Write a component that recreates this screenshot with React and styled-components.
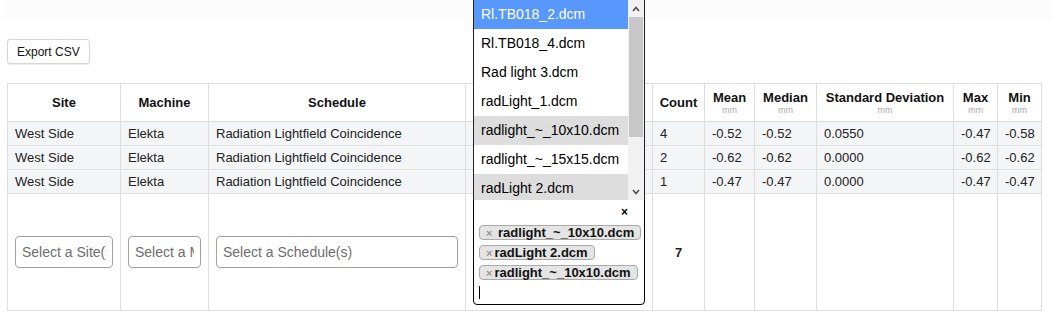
import React from "react"
import styled, { createGlobalStyle } from "styled-components"

const GlobalStyle = createGlobalStyle`
  body {
    margin: 0;
    background: #fff;
    color: #222;
    font-family: "Liberation Sans", Arial, sans-serif;
  }
`

const Page = styled.div`
  padding-left: 7px;
`

const TopBand = styled.div`
  height: 20px;
  margin-left: -4px;
  background: #fcfcfc;
`

const Toolbar = styled.div`
  padding: 19px 0 19px;
`

const Button = styled.button`
  display: block;
  height: 25px;
  padding: 0 9px;
  border: 1px solid #d6d6d6;
  border-radius: 3px;
  background: #fff;
  box-shadow: 0 1px 1px rgba(0, 0, 0, 0.08);
  font-family: inherit;
  font-size: 12px;
  color: #111;
`

const Table = styled.table`
  width: 1035px;
  table-layout: fixed;
  border-collapse: collapse;
  font-size: 13px;
`

const Th = styled.th`
  height: 37px;
  padding: 0 4px;
  border: 1px solid #dedede;
  background: #fff;
  color: #111;
  font-weight: bold;
  text-align: center;
  vertical-align: middle;
  line-height: 15px;
`

const Unit = styled.div`
  font-size: 9px;
  line-height: 11px;
  font-weight: normal;
  color: #aaa;
`

const Row = styled.tr`
  background: ${p => (p.$filter ? "#fff" : "#f4f5f7")};
`

const Td = styled.td`
  height: 23px;
  padding: 0 7px;
  border: 1px solid #dedede;
  vertical-align: middle;
  white-space: nowrap;
  overflow: ${p => (p.$open ? "visible" : "hidden")};
  text-align: ${p => (p.$center ? "center" : "left")};
  font-weight: ${p => (p.$bold ? "bold" : "normal")};
`

const FilterInput = styled.input`
  box-sizing: border-box;
  width: 100%;
  height: 32px;
  padding: 0 6px;
  border: 1px solid #a0a0a0;
  border-radius: 4px;
  font-family: inherit;
  font-size: 14px;

  &::placeholder {
    color: #6e6e6e;
  }
`

const MultiSelect = styled.div`
  position: relative;
  box-sizing: border-box;
  height: 106px;
  padding: 0 5px;
  border: 1px solid #000;
  border-radius: 0 0 4px 4px;
  background: #fff;
`

const ClearRow = styled.div`
  display: flex;
  justify-content: flex-end;
  align-items: center;
  height: 24px;
  margin-bottom: 1px;
  padding-right: 11px;
  font-size: 12px;
  font-weight: bold;
  color: #000;
`

const Tags = styled.div`
  display: flex;
  flex-direction: column;
  align-items: flex-start;
  gap: 5px;
`

const Tag = styled.span`
  box-sizing: border-box;
  height: 15px;
  padding: 0 6px;
  border: 1px solid #aaa;
  border-radius: 4px;
  background: #e4e4e4;
  font-size: 13px;
  font-weight: bold;
  line-height: 13px;
  color: #111;
  white-space: pre;
`

const TagRemove = styled.span`
  margin-right: 2px;
  font-size: 11px;
  color: #999;
`

const Caret = styled.div`
  width: 1px;
  height: 13px;
  margin-top: 6px;
  background: #000;
`

const Listbox = styled.div`
  position: absolute;
  left: -1px;
  right: -1px;
  bottom: 100%;
  z-index: 5;
  display: flex;
  height: 200px;
  overflow: hidden;
  border-left: 1px solid #222;
  border-right: 1px solid #222;
  background: #fff;
`

const Options = styled.div`
  flex: 1;
  min-width: 0;
`

const Option = styled.div`
  height: 29px;
  padding-left: 7px;
  font-size: 14px;
  line-height: 29px;
  white-space: nowrap;
  color: ${p => (p.$active ? "#fff" : "#000")};
  background: ${p => (p.$active ? "#5897fb" : p.$selected ? "#ddd" : "#fff")};
`

const Scrollbar = styled.div`
  display: flex;
  flex-direction: column;
  width: 16px;
  background: #f1f1f1;
`

const ScrollArrow = styled.div`
  display: flex;
  align-items: center;
  justify-content: center;
  height: 17px;
`

const ScrollTrack = styled.div`
  flex: 1;
`

const Thumb = styled.div`
  height: 120px;
  margin: 0 1px;
  background: #c8c8c8;
`

const columns = [
  { key: "site", label: "Site", width: 113 },
  { key: "machine", label: "Machine", width: 88 },
  { key: "schedule", label: "Schedule", width: 257 },
  { key: "file", label: "", width: 187 },
  { key: "count", label: "Count", width: 52 },
  { key: "mean", label: "Mean", unit: "mm", width: 50 },
  { key: "median", label: "Median", unit: "mm", width: 62 },
  { key: "sd", label: "Standard Deviation", unit: "mm", width: 137 },
  { key: "max", label: "Max", unit: "mm", width: 44 },
  { key: "min", label: "Min", unit: "mm", width: 44 },
]

// file column stays blank here, the open listbox covers it anyway
const rows = [
  ["West Side", "Elekta", "Radiation Lightfield Coincidence", "", "4", "-0.52", "-0.52", "0.0550", "-0.47", "-0.58"],
  ["West Side", "Elekta", "Radiation Lightfield Coincidence", "", "2", "-0.62", "-0.62", "0.0000", "-0.62", "-0.62"],
  ["West Side", "Elekta", "Radiation Lightfield Coincidence", "", "1", "-0.47", "-0.47", "0.0000", "-0.47", "-0.47"],
]

const options = [
  { name: "Rl.TB018_2.dcm", active: true },
  { name: "Rl.TB018_4.dcm" },
  { name: "Rad light 3.dcm" },
  { name: "radLight_1.dcm" },
  { name: "radlight_~_10x10.dcm", selected: true },
  { name: "radlight_~_15x15.dcm" },
  { name: "radLight 2.dcm", selected: true },
]

const chosen = [" radlight_~_10x10.dcm", "radLight 2.dcm", "radlight_~_10x10.dcm"]

const Chevron = ({ up }) => (
  <svg width="8" height="6" viewBox="0 0 8 6">
    <path
      d={up ? "M1 5 L4 1.5 L7 5" : "M1 1 L4 4.5 L7 1"}
      fill="none"
      stroke="#505050"
      strokeWidth="1.6"
    />
  </svg>
)

const FileFilter = () => (
  <MultiSelect>
    <Listbox>
      <Options>
        {options.map(o => (
          <Option key={o.name} $active={o.active} $selected={o.selected}>
            {o.name}
          </Option>
        ))}
      </Options>
      <Scrollbar>
        <ScrollArrow>
          <Chevron up />
        </ScrollArrow>
        <ScrollTrack>
          <Thumb />
        </ScrollTrack>
        <ScrollArrow>
          <Chevron />
        </ScrollArrow>
      </Scrollbar>
    </Listbox>
    <ClearRow>×</ClearRow>
    <Tags>
      {chosen.map((c, i) => (
        <Tag key={i}>
          <TagRemove>×</TagRemove>
          {c}
        </Tag>
      ))}
    </Tags>
    <Caret />
  </MultiSelect>
)

const App = () => {
  return (
    <Page>
      <GlobalStyle />
      <TopBand />
      <Toolbar>
        <Button>Export CSV</Button>
      </Toolbar>
      <Table>
        <colgroup>
          {columns.map(c => (
            <col key={c.key} style={{ width: c.width }} />
          ))}
        </colgroup>
        <thead>
          <tr>
            {columns.map(c => (
              <Th key={c.key}>
                {c.label}
                {c.unit && <Unit>{c.unit}</Unit>}
              </Th>
            ))}
          </tr>
        </thead>
        <tbody>
          {rows.map((r, i) => (
            <Row key={i}>
              {r.map((v, j) => (
                <Td key={j}>{v}</Td>
              ))}
            </Row>
          ))}
          <Row $filter>
            <Td>
              <FilterInput placeholder="Select a Site(s)" />
            </Td>
            <Td>
              <FilterInput placeholder="Select a Machine(s)" />
            </Td>
            <Td>
              <FilterInput placeholder="Select a Schedule(s)" />
            </Td>
            <Td $open style={{ padding: "5px 7px" }}>
              <FileFilter />
            </Td>
            <Td $center $bold>7</Td>
            <Td />
            <Td />
            <Td />
            <Td />
            <Td />
          </Row>
        </tbody>
      </Table>
    </Page>
  )
}

export default App
